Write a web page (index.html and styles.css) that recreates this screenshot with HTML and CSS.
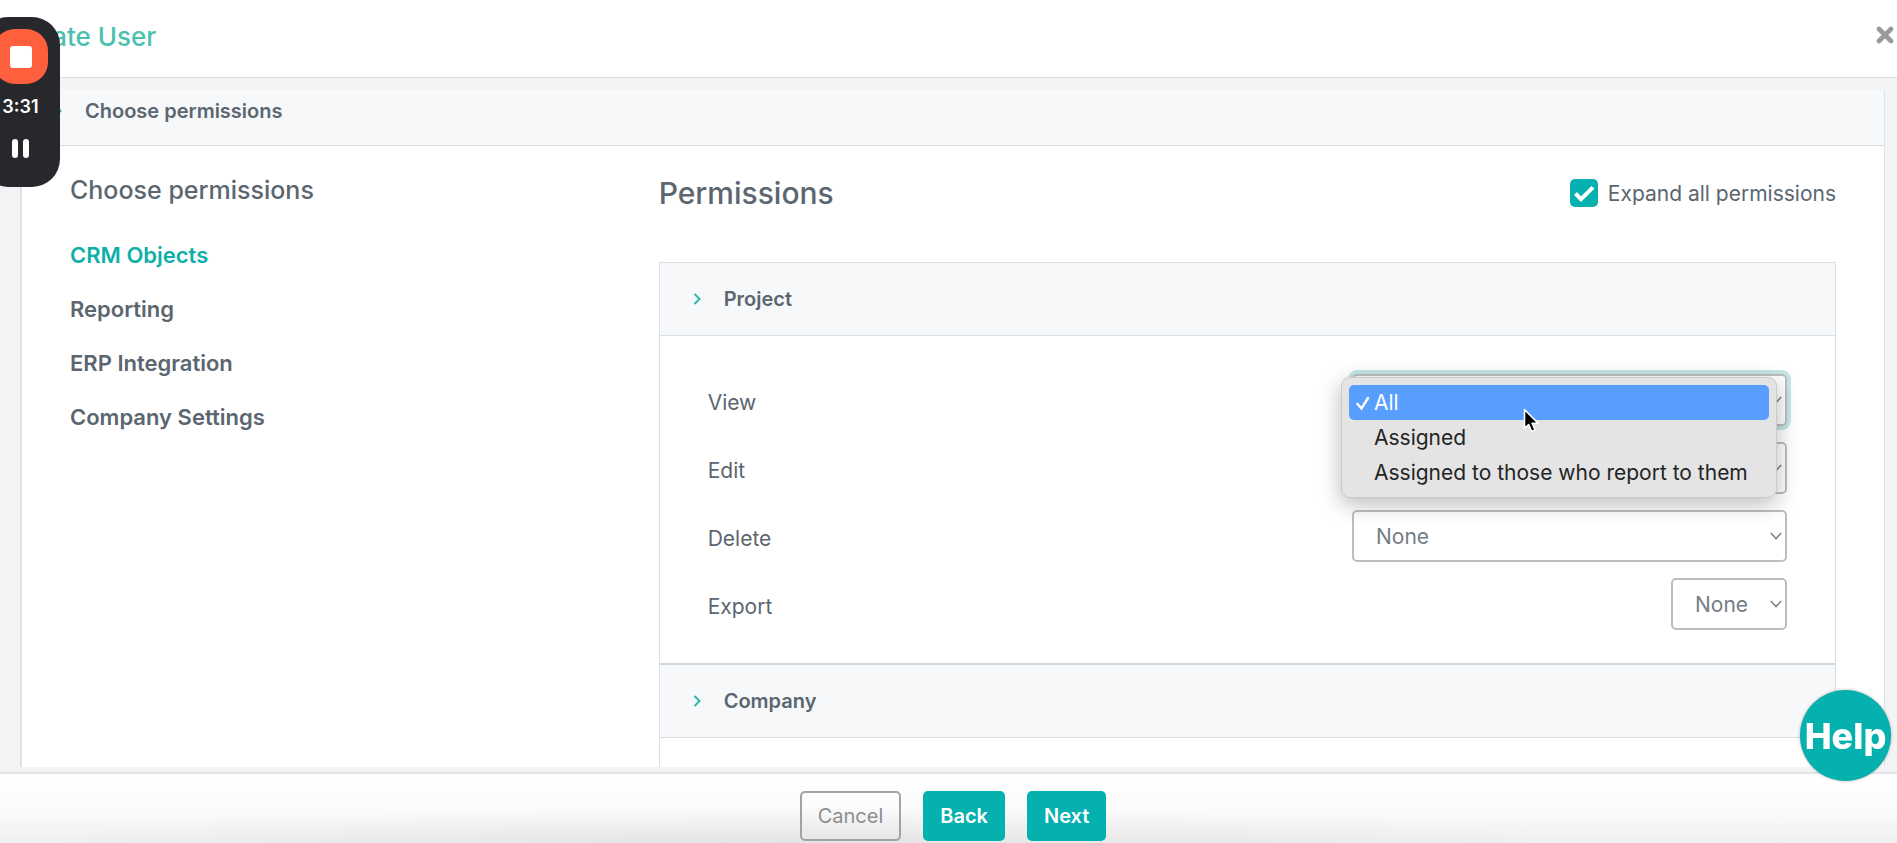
FILE: index.html
```html
<!DOCTYPE html>
<html lang="en">
<head>
<meta charset="utf-8">
<meta name="viewport" content="width=device-width, initial-scale=1">
<title>Create User</title>
<link rel="stylesheet" href="styles.css">
</head>
<body>
<div class="modal">
  <header class="modal-header">
    <h1 class="modal-title">Create User</h1>
    <button class="close" type="button" aria-label="Close">
      <svg width="18" height="18" viewBox="0 0 18 18"><path d="M3 3l12 12M15 3L3 15" stroke="#999" stroke-width="4.6" stroke-linecap="round"/></svg>
    </button>
  </header>

  <main class="modal-body">
    <div class="card">
      <div class="step">
        <svg class="chevron" width="8" height="12" viewBox="0 0 8 12"><path d="M1.5 1l5 5-5 5"/></svg>
        <span>Choose permissions</span>
      </div>
      <div class="columns">
        <nav class="side">
          <h2 class="side-title">Choose permissions</h2>
          <a class="side-link active" href="#crm">CRM Objects</a>
          <a class="side-link" href="#reporting">Reporting</a>
          <a class="side-link" href="#erp">ERP Integration</a>
          <a class="side-link" href="#company">Company Settings</a>
        </nav>
        <section class="content">
          <div class="content-head">
            <h2 class="content-title">Permissions</h2>
            <label class="expand">
              <span class="check">
                <input type="checkbox" checked>
                <svg width="28" height="28" viewBox="0 0 28 28"><path d="M5.5 14.5l5.5 5.7L23 8.4"/></svg>
              </span>
              Expand all permissions
            </label>
          </div>
          <div class="accordion">
            <button class="panel-head" type="button">
              <svg class="chevron" width="8" height="12" viewBox="0 0 8 12"><path d="M1.5 1l5 5-5 5"/></svg>
              <span>Project</span>
            </button>
            <div class="panel-body">
              <div class="row">
                <label for="view">View</label>
                <div class="picker">
                  <select id="view" class="focused"><option>All</option><option>Assigned</option><option>Assigned to those who report to them</option></select>
                  <svg class="arrow" width="12" height="8" viewBox="0 0 12 8"><path d="M.8 1L6 6.6 11.2 1"/></svg>
                  <ul class="popup" role="listbox" aria-label="View">
                    <li class="option selected" role="option" aria-selected="true">
                      <svg class="tick" width="14" height="16" viewBox="0 0 14 16"><path d="M1.5 9l4 4.5L12 3"/></svg>All</li>
                    <li class="option" role="option">Assigned</li>
                    <li class="option" role="option">Assigned to those who report to them</li>
                  </ul>
                  <svg class="cursor" width="18" height="26" viewBox="0 0 18 26"><path d="M1.5 1.5v19l4.2-4 3 7 3.4-1.5-3-6.8h6z" fill="#000" stroke="#fff" stroke-width="1.6" stroke-linejoin="round"/></svg>
                </div>
              </div>
              <div class="row">
                <label for="edit">Edit</label>
                <div class="picker">
                  <select id="edit"><option>None</option></select>
                  <svg class="arrow" width="12" height="8" viewBox="0 0 12 8"><path d="M.8 1L6 6.6 11.2 1"/></svg>
                </div>
              </div>
              <div class="row">
                <label for="delete">Delete</label>
                <div class="picker">
                  <select id="delete"><option>None</option></select>
                  <svg class="arrow" width="12" height="8" viewBox="0 0 12 8"><path d="M.8 1L6 6.6 11.2 1"/></svg>
                </div>
              </div>
              <div class="row">
                <label for="export">Export</label>
                <div class="picker short">
                  <select id="export"><option>None</option></select>
                  <svg class="arrow" width="12" height="8" viewBox="0 0 12 8"><path d="M.8 1L6 6.6 11.2 1"/></svg>
                </div>
              </div>
            </div>
            <button class="panel-head next" type="button">
              <svg class="chevron" width="8" height="12" viewBox="0 0 8 12"><path d="M1.5 1l5 5-5 5"/></svg>
              <span>Company</span>
            </button>
            <div class="panel-body"></div>
          </div>
        </section>
      </div>
    </div>
  </main>

  <footer class="modal-footer">
    <button class="btn outline" type="button">Cancel</button>
    <button class="btn" type="button">Back</button>
    <button class="btn" type="button">Next</button>
  </footer>
</div>

<button class="help" type="button">Help</button>

<aside class="recorder">
  <button class="stop" type="button" aria-label="Stop recording"><span class="stop-square"></span></button>
  <span class="time">3:31</span>
  <button class="pause" type="button" aria-label="Pause recording"><span class="bar"></span><span class="bar"></span></button>
</aside>
</body>
</html>
```
FILE: styles.css
```css
* { box-sizing: border-box; }

body {
  margin: 0;
  font-family: Inter, "Liberation Sans", sans-serif;
  font-size: 21px;
  color: #5b6670;
  background: #fff;
}

button { font-family: inherit; cursor: pointer; }
h1, h2, ul { margin: 0; padding: 0; }

.modal {
  display: flex;
  flex-direction: column;
  height: 100vh;
  overflow: hidden;
}

.modal-header {
  display: flex;
  flex: none;
  align-items: center;
  justify-content: space-between;
  height: 78px;
  padding: 0 3px 5px 8px;
  border-bottom: 1px solid #dcdfe2;
}

.modal-title { font-size: 26px; font-weight: 500; color: #4cc0ae; }

.close { display: flex; padding: 0 0 3px; border: 0; background: none; }

.modal-body {
  flex: 1;
  min-height: 0;
  padding: 12px 12px 5px 20px;
  background: #f2f4f6;
}

.card {
  height: 100%;
  overflow: hidden;
  background: #fff;
  border: solid #dde3e9;
  border-width: 0 1px 0 2px;
}

.step {
  display: flex;
  align-items: center;
  gap: 23px;
  height: 56px;
  padding: 0 32px 14px;
  background: #f6f8fa;
  border-bottom: 1px solid #d5dde4;
  font-size: 20px;
  font-weight: 600;
}

.chevron { flex: none; fill: none; stroke: #2cb9ac; stroke-width: 2; }

.columns { display: grid; grid-template-columns: 1fr 2fr; padding: 0 48px; }

.side { display: flex; flex-direction: column; padding-top: 26px; }
.side-title { margin-bottom: 33px; font-size: 25px; line-height: 36px; font-weight: 500; }
.side-link {
  margin-bottom: 26px;
  font-size: 22px;
  line-height: 28px;
  font-weight: 600;
  color: #5b6670;
  text-decoration: none;
}
.side-link.active { color: #0db0a9; }

.content { padding-top: 27px; }
.content-head {
  display: flex;
  align-items: center;
  justify-content: space-between;
  height: 40px;
  margin-bottom: 49px;
}
.content-title { font-size: 30px; font-weight: 500; }

.expand { display: flex; align-items: center; gap: 10px; }
.check { display: grid; }
.check > * { grid-area: 1 / 1; }
.check input {
  width: 28px;
  height: 28px;
  margin: 0;
  appearance: none;
  background: #04b1af;
  border-radius: 5px;
}
.check svg { fill: none; stroke: #fff; stroke-width: 4; pointer-events: none; }

.accordion { border: 1px solid #d9dfe6; }

.panel-head {
  display: flex;
  align-items: center;
  gap: 23px;
  width: 100%;
  height: 73px;
  padding: 0 33px;
  background: #f6f8fa;
  border: 0;
  border-bottom: 1px solid #d9dfe6;
  color: #5b6670;
  font-size: 20px;
  font-weight: 600;
}
.panel-head.next { height: 75px; border-top: 2px solid #ced9de; }

.panel-body {
  display: flex;
  flex-direction: column;
  gap: 16px;
  min-height: 60px;
  padding: 38px 48px 33px;
}

.row { display: flex; align-items: center; justify-content: space-between; }
.row label { padding-top: 4px; }

.picker { position: relative; width: 435px; height: 52px; }
.picker.short { width: 116px; }
.picker select {
  width: 100%;
  height: 100%;
  padding: 0 22px 0 22px;
  appearance: none;
  background: #fff;
  border: 2px solid #bbbfc1;
  border-radius: 5px;
  color: #757d84;
  font-family: inherit;
  font-size: 21px;
}
.picker select.focused { box-shadow: 0 0 0 4px #c4e6e5; }

.arrow {
  position: absolute;
  top: 22px;
  right: 5px;
  fill: none;
  stroke: #7c8286;
  stroke-width: 1.5;
  pointer-events: none;
}

.popup {
  position: absolute;
  z-index: 2;
  top: 3px;
  left: -11px;
  width: 436px;
  padding: 7px;
  list-style: none;
  background: #e3e4e3;
  border: 1px solid #c9cac9;
  border-radius: 9px;
  box-shadow: 0 6px 22px rgba(0, 0, 0, 0.28);
  color: #232425;
  font-size: 21px;
}
.option {
  position: relative;
  padding-left: 25px;
  line-height: 35px;
  border-radius: 5px;
  white-space: nowrap;
}
.option.selected { background: #579eff; color: #fff; }
.tick {
  position: absolute;
  top: 10px;
  left: 7px;
  fill: none;
  stroke: #fff;
  stroke-width: 2.4;
  stroke-linecap: round;
}
.cursor { position: absolute; z-index: 3; top: 34px; left: 171px; }

.modal-footer {
  display: flex;
  flex: none;
  align-items: flex-start;
  justify-content: center;
  gap: 22px;
  height: 71px;
  padding: 17px 0 0 9px;
  border-top: 2px solid #e2e4e6;
  background:
    radial-gradient(ellipse 40% 36px at 42% 100%, rgba(0, 0, 0, 0.05), transparent),
    linear-gradient(#fff 10%, #fafafa 55%, #efefef);
}
.btn {
  height: 50px;
  padding: 0 17px;
  background: #04b1af;
  border: 0;
  border-radius: 5px;
  color: #fff;
  font-size: 20px;
  font-weight: 600;
}
.btn.outline {
  padding: 0 16px;
  background: none;
  border: 2px solid #a0a4a5;
  color: #8a8e90;
  font-weight: 400;
}

.help {
  position: fixed;
  right: 6px;
  bottom: 62px;
  width: 91px;
  height: 91px;
  padding: 0;
  background: #04b1af;
  border: 0;
  border-radius: 50%;
  box-shadow: 0 0 3px rgba(120, 60, 60, 0.45);
  color: #fff;
  font-size: 36px;
  font-weight: 800;
}

.recorder {
  position: fixed;
  top: 17px;
  left: -20px;
  display: flex;
  flex-direction: column;
  align-items: center;
  width: 80px;
  height: 170px;
  padding: 12px 0 0 1px;
  background: #27282c;
  border-radius: 28px;
}
.stop {
  display: grid;
  place-items: center;
  width: 55px;
  height: 55px;
  padding: 0;
  background: #ff5f3c;
  border: 0;
  border-radius: 22px;
}
.stop-square { width: 22px; height: 22px; background: #fff; border-radius: 3px; }
.time { margin-top: 12px; color: #fff; font-size: 18px; line-height: 22px; font-weight: 600; }
.pause {
  display: flex;
  gap: 5px;
  margin-top: 21px;
  padding: 0;
  background: none;
  border: 0;
}
.bar { width: 6px; height: 19px; background: #fff; border-radius: 3px; }
```
